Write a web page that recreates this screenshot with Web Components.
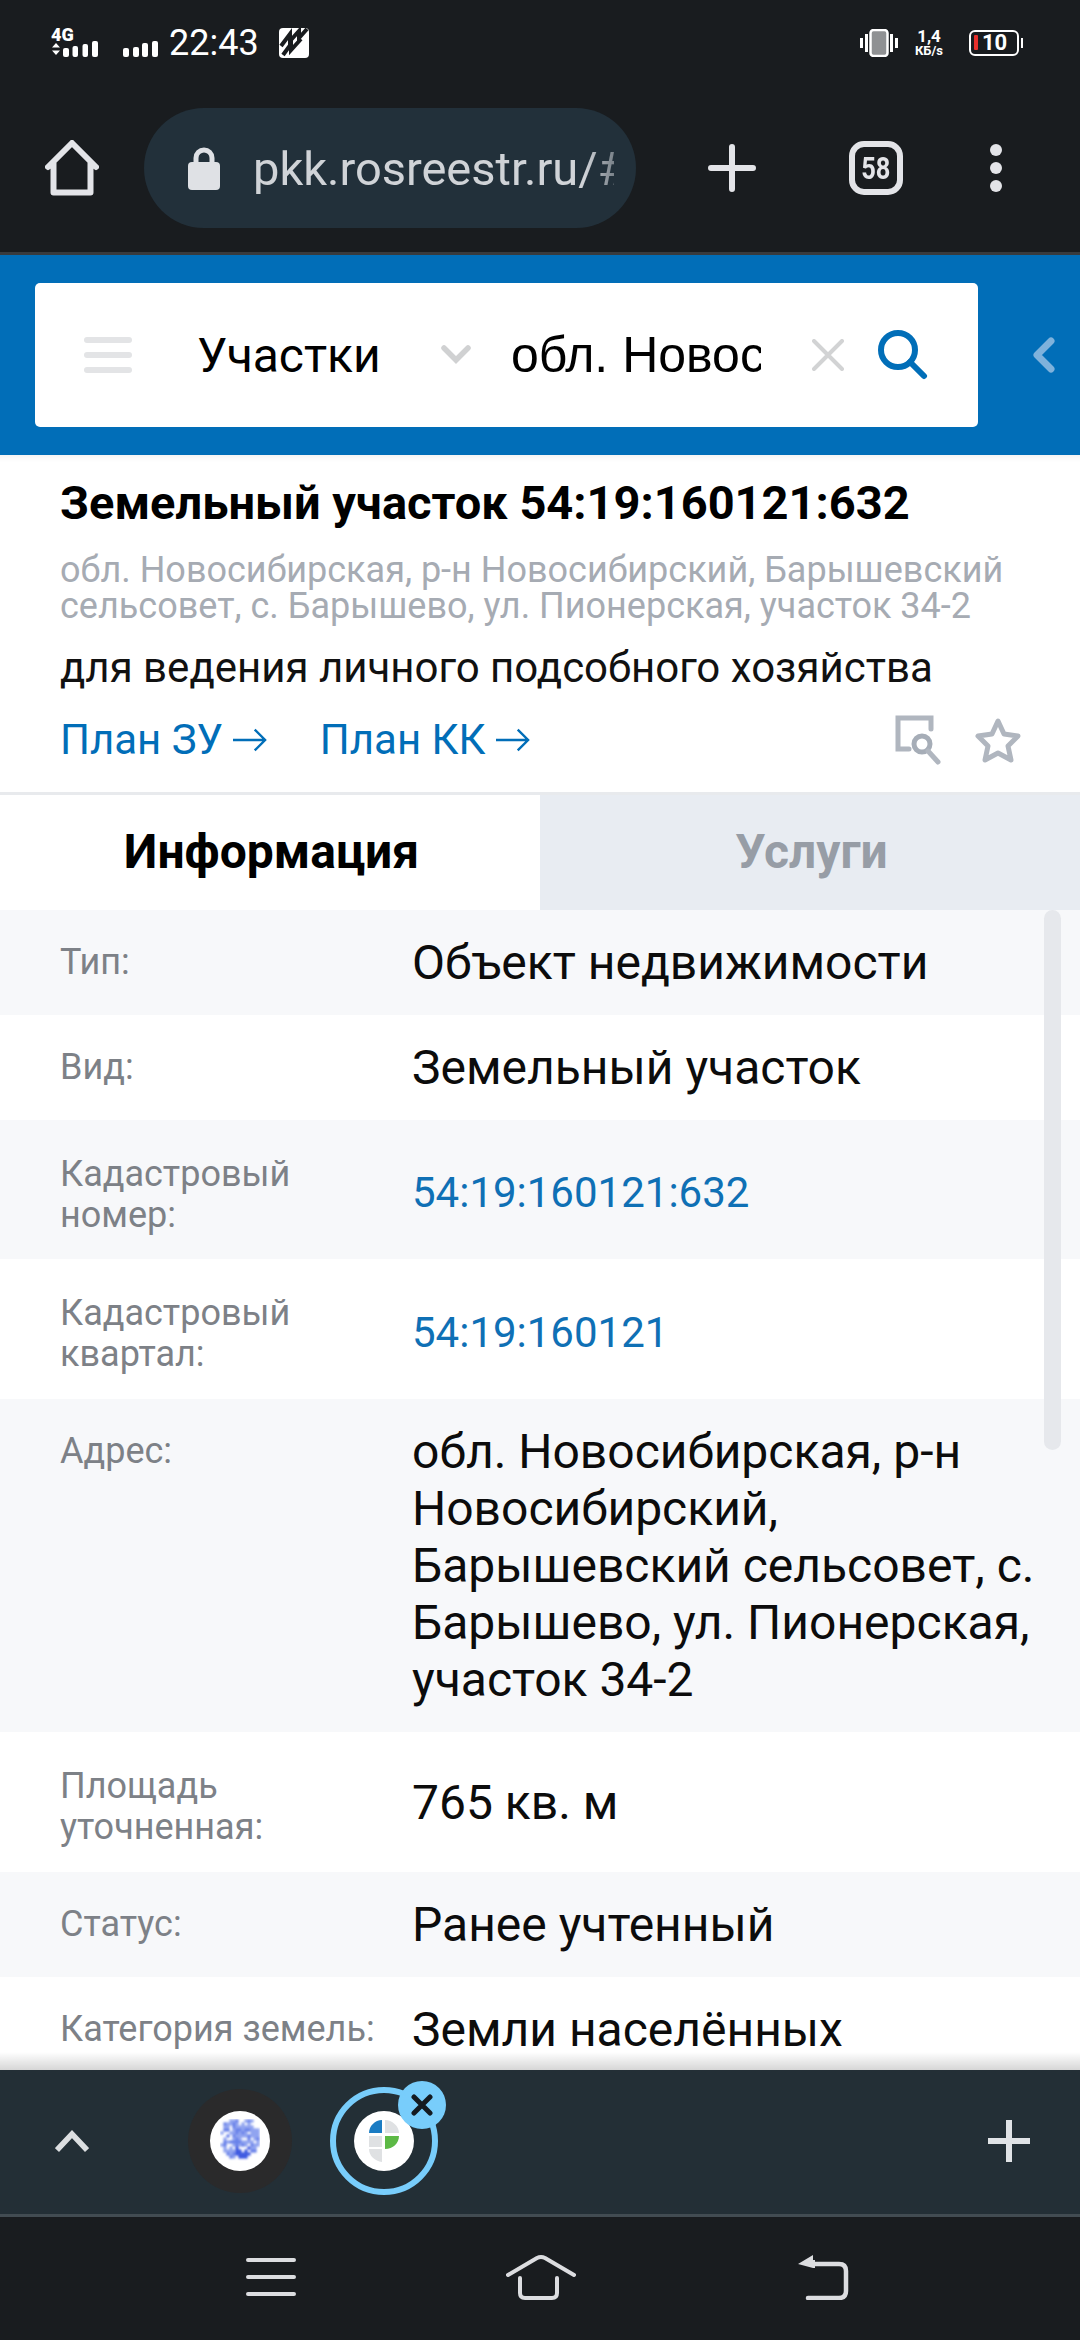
<!DOCTYPE html>
<html lang="ru">
<head>
<meta charset="utf-8">
<title>Земельный участок</title>
<style>
  html, body { margin: 0; padding: 0; background: #fff; }
  body { width: 1080px; height: 2340px; overflow: hidden; display: flex; flex-direction: column; font-family: Roboto, "Noto Sans", sans-serif; }
  .content { flex: 1; min-height: 0; overflow: hidden; position: relative; }
</style>
</head>
<body>
<phone-status></phone-status>
<browser-bar url="pkk.rosreestr.ru/#/search"></browser-bar>
<search-header></search-header>
<parcel-summary
  title="Земельный участок 54:19:160121:632"
  address="обл. Новосибирская, р-н Новосибирский, Барышевский сельсовет, с. Барышево, ул. Пионерская, участок 34-2"
  purpose="для ведения личного подсобного хозяйства"></parcel-summary>
<info-tabs></info-tabs>
<div class="content">
  <info-row label="Тип:" h="105" shade>Объект недвижимости</info-row>
  <info-row label="Вид:" h="105">Земельный участок</info-row>
  <info-row label="Кадастровый номер:" h="139" shade link two>54:19:160121:632</info-row>
  <info-row label="Кадастровый квартал:" h="140" link two>54:19:160121</info-row>
  <info-row label="Адрес:" h="333" shade top>обл. Новосибирская, р-н Новосибирский, Барышевский сельсовет, с. Барышево, ул. Пионерская, участок 34-2</info-row>
  <info-row label="Площадь уточненная:" h="140" two>765 кв. м</info-row>
  <info-row label="Статус:" h="105" shade>Ранее учтенный</info-row>
  <info-row label="Категория земель:" h="105">Земли населённых</info-row>
  <scroll-thumb></scroll-thumb>
</div>
<tab-strip></tab-strip>
<nav-bar></nav-bar>

<script>
'use strict';

// small helper, every element below is just a template in a shadow root
function define(name, html, init) {
  customElements.define(name, class extends HTMLElement {
    constructor() {
      super();
      this.attachShadow({mode: 'open'}).innerHTML = html;
    }
    connectedCallback() {
      if (init) init.call(this, this.shadowRoot);
    }
  });
}

define('phone-status', `<style>
  :host { display: flex; align-items: center; height: 60px; padding: 26px 0 0 51px; box-sizing: border-box; background: #191c1f; color: #fff; flex: none; }
  svg { display: block; flex: none; }
  .time { font-size: 36px; line-height: 44px; margin-left: 10px; width: 90px; }
  .right { margin-left: auto; display: flex; align-items: center; margin-right: 57px; }
  .speed { font-weight: 700; text-align: center; margin: 0 0 0 13px; width: 36px; }
  .speed div:first-child { font-size: 17px; line-height: 15px; }
  .speed div:last-child { font-size: 13px; line-height: 14px; }
  .batt { position: relative; width: 50px; height: 26px; border: 2.5px solid #fff; border-radius: 6px; margin-left: 22px; box-sizing: border-box; font-size: 22px; font-weight: 700; line-height: 22px; padding-left: 11px; }
  .batt i { position: absolute; left: 2.5px; top: 3px; width: 4px; height: 15px; background: #e8302c; border-radius: 1px; }
  .nub { width: 2px; height: 10px; background: #fff; margin-left: 2px; }
</style>
<svg width="47" height="32" viewBox="0 0 47 32" fill="#fff">
  <text x="0" y="14" font-family="Roboto" font-size="18" font-weight="900">4G</text>
  <path d="M1 20.500h8l-4-4.500zM1 23.500h8l-4 4.500z"/>
  <rect x="12" y="21" width="6" height="9" rx="2"/><rect x="21.500" y="19" width="5.500" height="11" rx="2"/><rect x="31.500" y="17" width="5.500" height="13" rx="2"/><rect x="41" y="14" width="6" height="16" rx="2"/>
</svg>
<svg style="margin-left:25px" width="36" height="28" viewBox="0 0 36 28" fill="#fff">
  <rect x="0" y="19" width="6" height="9" rx="2"/><rect x="10" y="18" width="6" height="10" rx="2"/><rect x="19" y="14" width="6" height="14" rx="2"/><rect x="29" y="12" width="6" height="16" rx="2"/>
</svg>
<span class="time">22:43</span>
<svg style="margin-left:20px" width="30" height="30" viewBox="0 0 30 30">
  <rect width="30" height="30" rx="4" fill="#fff"/>
  <path d="M2 18 11 6v7l9-10v7l8-9M4 27l8-11v6l10-11" fill="none" stroke="#191c1f" stroke-width="4"/>
</svg>
<div class="right">
  <svg width="38" height="28" viewBox="0 0 38 28" fill="#fff">
    <rect x="0" y="9" width="3" height="10"/><rect x="5" y="5" width="3" height="18"/>
    <rect x="30" y="5" width="3" height="18"/><rect x="35" y="9" width="3" height="10"/>
    <rect x="10.500" y="1" width="17" height="26" rx="3" fill="#8f9193" stroke="#fff" stroke-width="2.500"/>
  </svg>
  <div class="speed"><div>1,4</div><div>КБ/s</div></div>
  <div class="batt"><i></i>10</div>
  <div class="nub"></div>
</div>`);

define('browser-bar', `<style>
  :host { display: flex; align-items: center; height: 195px; padding-top: 24px; box-sizing: border-box; background: #191c1f; border-bottom: 3px solid #383b3e; flex: none; }
  svg { display: block; flex: none; }
  .pill { width: 492px; height: 120px; margin-left: 45px; border-radius: 60px; background: #22303a; display: flex; align-items: center; padding-left: 44px; box-sizing: border-box; color: #dfe1e5; }
  .url { font-size: 47px; margin-left: 33px; width: 361px; overflow: hidden; white-space: nowrap; opacity: .92; -webkit-mask-image: linear-gradient(90deg, #000 92%, rgba(0,0,0,.5)); }
  .tabs { width: 54px; height: 54px; border: 6px solid #e3e4e8; border-radius: 15px; box-sizing: border-box; color: #e3e4e8; font-size: 31px; font-weight: 700; display: flex; align-items: center; justify-content: center; flex: none; }
  .tabs span { display: block; transform: scaleX(.82); }
</style>
<svg style="margin-left:45px" width="54" height="56" viewBox="0 0 54 56" fill="none" stroke="#e3e4e8" stroke-width="6" stroke-linejoin="round" stroke-linecap="round">
  <path d="M3 27 27 3l24 24M8.500 23v29.500h37V23"/>
</svg>
<div class="pill">
  <svg width="32" height="44" viewBox="0 0 32 44"><path d="M8 20v-8a8 8 0 0 1 16 0v8" fill="none" stroke="#dfe1e5" stroke-width="5"/><rect y="16" width="32" height="28" rx="4" fill="#dfe1e5"/></svg>
  <span class="url"></span>
</div>
<svg style="margin-left:72px" width="48" height="48" viewBox="0 0 48 48" stroke="#e3e4e8" stroke-width="6" stroke-linecap="round"><path d="M24 3v42M3 24h42"/></svg>
<div class="tabs" style="margin-left:93px"><span>58</span></div>
<svg style="margin-left:87px" width="12" height="48" viewBox="0 0 12 48" fill="#e3e4e8"><circle cx="6" cy="6" r="6"/><circle cx="6" cy="24" r="6"/><circle cx="6" cy="42" r="6"/></svg>`,
function (root) {
  root.querySelector('.url').textContent = this.getAttribute('url');
});

define('search-header', `<style>
  :host { display: flex; align-items: center; height: 200px; background: #016eb8; padding-left: 35px; box-sizing: border-box; flex: none; }
  svg { display: block; flex: none; }
  .box { width: 943px; height: 144px; background: #fff; border-radius: 5px; display: flex; align-items: center; box-sizing: border-box; padding-left: 49px; flex: none; }
  .kind { font-size: 48px; color: #000; margin-left: 65px; width: 180px; white-space: nowrap; flex: none; }
  .query { font-size: 50px; color: #000; margin-left: 40px; width: 250px; overflow: hidden; white-space: nowrap; font-family: "Liberation Sans", Arial, sans-serif; flex: none; }
</style>
<div class="box">
  <svg width="48" height="36" viewBox="0 0 48 36" fill="#e3e4e6"><rect width="48" height="6" rx="3"/><rect y="15" width="48" height="6" rx="3"/><rect y="30" width="48" height="6" rx="3"/></svg>
  <span class="kind">Участки</span>
  <svg style="margin-left:64px" width="30" height="20" viewBox="0 0 30 20" fill="none" stroke="#d0d1d2" stroke-width="5.500" stroke-linecap="round"><path d="M3 3l12 12L27 3"/></svg>
  <span class="query">обл. Новосибирская</span>
  <svg style="margin-left:51px" width="32" height="32" viewBox="0 0 32 32" stroke="#d2d3d4" stroke-width="4" stroke-linecap="round"><path d="M2 2l28 28M30 2 2 30"/></svg>
  <svg style="margin-left:34px" width="50" height="50" viewBox="0 0 50 50" fill="none" stroke="#016eb8" stroke-width="6" stroke-linecap="round"><circle cx="20" cy="20" r="17"/><path d="M32 32l14 14"/></svg>
</div>
<svg style="margin-left:55px" width="22" height="36" viewBox="0 0 22 36" fill="none" stroke="#7fb2dc" stroke-width="7" stroke-linecap="round" stroke-linejoin="round"><path d="M18 4 4 18l14 14"/></svg>`);

define('parcel-summary', `<style>
  :host { display: block; height: 337px; padding: 0 0 0 60px; box-sizing: border-box; background: #fff; position: relative; box-shadow: inset 0 8px 6px -6px rgba(0,0,0,.06); flex: none; }
  h1 { margin: 0; padding-top: 23px; font-size: 47px; line-height: 50px; font-weight: 700; color: #000; white-space: nowrap; }
  .addr { margin-top: 24px; font-size: 36px; line-height: 36px; color: #a6abb3; width: 980px; }
  .purpose { margin-top: 21px; font-size: 42px; line-height: 46px; color: #111; white-space: nowrap; }
  .actions { display: flex; align-items: center; margin-top: 24px; color: #016eb8; font-size: 42px; line-height: 50px; }
  .actions a { display: flex; align-items: center; margin-right: 53px; white-space: nowrap; }
  .actions a svg { margin-left: 10px; }
  svg { display: block; flex: none; }
  .tools { margin-left: auto; display: flex; align-items: center; margin-right: 59px; }
</style>
<h1></h1>
<div class="addr"></div>
<div class="purpose"></div>
<div class="actions">
  <a>План ЗУ<svg width="34" height="26" viewBox="0 0 36 26" fill="none" stroke="#016eb8" stroke-width="2.500"><path d="M0 13h34M23 2l11 11-11 11"/></svg></a>
  <a>План КК<svg width="34" height="26" viewBox="0 0 36 26" fill="none" stroke="#016eb8" stroke-width="2.500"><path d="M0 13h34M23 2l11 11-11 11"/></svg></a>
  <div class="tools">
    <svg width="50" height="50" viewBox="0 0 50 50" fill="none" stroke="#b0b6bf" stroke-width="5" stroke-linecap="round"><path d="M14 34H3V3h33v11"/><circle cx="27" cy="29" r="8" stroke="#a6adb7"/><path d="M33 36l10 11"/></svg>
    <svg style="margin-left:30px" width="46" height="46" viewBox="0 0 46 46" fill="none" stroke="#b0b6bf" stroke-width="5" stroke-linejoin="round"><path d="M23 4l6 13 14 2-10 10 3 14-13-7-13 7 3-14L3 19l14-2z"/></svg>
  </div>
</div>`,
function (root) {
  root.querySelector('h1').textContent = this.getAttribute('title');
  root.querySelector('.addr').textContent = this.getAttribute('address');
  root.querySelector('.purpose').textContent = this.getAttribute('purpose');
});

define('info-tabs', `<style>
  :host { display: flex; height: 118px; border-top: 3px solid #e8eaed; box-sizing: border-box; font-size: 48px; font-weight: 700; flex: none; }
  div { display: flex; align-items: center; justify-content: center; width: 540px; padding: 0 0 2px 3px; box-sizing: border-box; }
  .on { color: #000; background: #fff; }
  .off { color: #979da6; background: #e8ecf2; }
</style>
<div class="on">Информация</div>
<div class="off">Услуги</div>`);

define('info-row', `<style>
  :host { display: grid; grid-template-columns: 352px 1fr; box-sizing: border-box; padding-left: 60px; align-items: center; background: #fff; }
  :host([shade]) { background: #f7f8fa; }
  :host([top]) { align-items: start; padding-top: 24px; }
  :host([top]) .label { margin-top: 8px; }
  :host([two]) .label { margin-top: 10px; }
  .label { font-size: 36px; line-height: 41px; color: #7d8187; width: 330px; }
  .value { font-size: 48px; line-height: 57px; color: #0c0c0c; padding-right: 36px; }
  :host([link]) .value { color: #0f70b5; font-size: 42px; padding-top: 6px; }
</style>
<div class="label"></div>
<div class="value"><slot></slot></div>`,
function (root) {
  root.querySelector('.label').textContent = this.getAttribute('label');
  this.style.height = this.getAttribute('h') + 'px';
});

define('scroll-thumb', `<style>
  :host { position: absolute; top: 0; left: 1044px; width: 17px; height: 540px; border-radius: 9px; background: #e6e8ec; }
</style>`);

define('tab-strip', `<style>
  :host { display: flex; align-items: center; position: relative; height: 147px; padding-bottom: 3px; box-sizing: border-box; background: #232f36; border-bottom: 3px solid #424c52; flex: none; }
  :host::before { content: ''; position: absolute; left: 0; right: 0; top: -18px; height: 18px; background: linear-gradient(rgba(0,0,0,0), rgba(0,0,0,.16)); }
  svg { display: block; flex: none; }
  .fav { width: 60px; height: 60px; border-radius: 50%; background: #fff; display: flex; align-items: center; justify-content: center; }
  .tab { width: 104px; height: 104px; border-radius: 50%; box-sizing: border-box; display: flex; align-items: center; justify-content: center; flex: none; position: relative; }
  .dim { background: #2a2a2b; margin-left: 99px; }
  .active { border: 6px solid #78cdfb; margin-left: 38px; width: 108px; height: 108px; }
  .x { position: absolute; left: 62px; top: -12px; width: 48px; height: 48px; border-radius: 50%; background: #78cdfb; display: flex; align-items: center; justify-content: center; }
</style>
<svg style="margin-left:55px" width="34" height="22" viewBox="0 0 34 22" fill="none" stroke="#dcdfe1" stroke-width="5.500"><path d="M2 20 17 4l15 16"/></svg>
<div class="tab dim">
  <div class="fav">
    <svg class="blob" width="40" height="44" viewBox="0 0 40 44">
      <defs><filter id="b"><feGaussianBlur stdDeviation="1"/></filter></defs>
      <g class="dots" filter="url(#b)"></g>
    </svg>
  </div>
</div>
<div class="tab active">
  <div class="fav">
    <svg width="30" height="42" viewBox="0 0 30 42">
      <path d="M13 0v13H0C0 6 6 0 13 0z" fill="#1a7cc3"/>
      <path d="M16 0c7 0 14 6 14 13H16zM0 16h13v11H0zM0 29h13v13C6 41 0 36 0 29z" fill="#dfe1e3"/>
      <path d="M16 16h14c0 7-6 13-14 13z" fill="#5cb945"/>
    </svg>
  </div>
  <div class="x">
    <svg width="22" height="22" viewBox="0 0 22 22" stroke="#141a20" stroke-width="5" stroke-linecap="round"><path d="M3 3l16 16M19 3 3 19"/></svg>
  </div>
</div>
<svg style="margin-left:auto;margin-right:50px" width="42" height="42" viewBox="0 0 42 42" fill="#e0e3e6"><rect x="18" width="6" height="42"/><rect y="18" width="42" height="6"/></svg>`,
function (root) {
  // blurry blue favicon, a speckled blob, darker towards the bottom
  let out = '';
  let seed = 7;
  for (let y = 2; y < 42; y += 3) {
    for (let x = 2; x < 39; x += 3) {
      seed = (seed * 73 + 41) % 101;
      const dx = (x - 20) / 19;
      const dy = (y - 20) / 22;
      if (dx * dx + dy * dy * (y > 20 ? 1.1 : .6) > 1) continue;
      if (seed % 4 === 0) continue;
      const dark = y > 28 && x > 14 && x < 32;
      const fill = dark ? '#1f3fdc' : (seed % 3 ? '#7f95ee' : '#4f6ce6');
      out += `<rect x="${x - 1.5}" y="${y - 1.5}" width="3" height="3" fill="${fill}"/>`;
    }
  }
  root.querySelector('.dots').innerHTML = out;
});

define('nav-bar', `<style>
  :host { display: flex; align-items: center; height: 123px; background: #191c1f; padding-bottom: 3px; box-sizing: border-box; flex: none; }
  svg { display: block; flex: none; }
</style>
<svg style="margin-left:246px" width="50" height="38" viewBox="0 0 50 38" stroke="#dcdde0" stroke-width="4" stroke-linecap="round"><path d="M2 2h46M2 19h46M2 36h46"/></svg>
<svg style="margin-left:210px" width="70" height="46" viewBox="0 0 70 46" fill="none" stroke="#dcdde0" stroke-width="4" stroke-linecap="round" stroke-linejoin="round"><path d="M2 21 31 4q4-2 8 0l29 17M14 24v15q0 5 5 5h27q5 0 5-5v-15"/></svg>
<svg style="margin-left:221px" width="52" height="46" viewBox="0 0 52 46" fill="none"><path d="M1 10 16 1v5h2v8h-2z" fill="#dcdde0"/><path d="M14 10h28q7 0 7 7v20q0 7-7 7H11" stroke="#dcdde0" stroke-width="4.500" stroke-linecap="round"/></svg>`);
</script>
</body>
</html>
